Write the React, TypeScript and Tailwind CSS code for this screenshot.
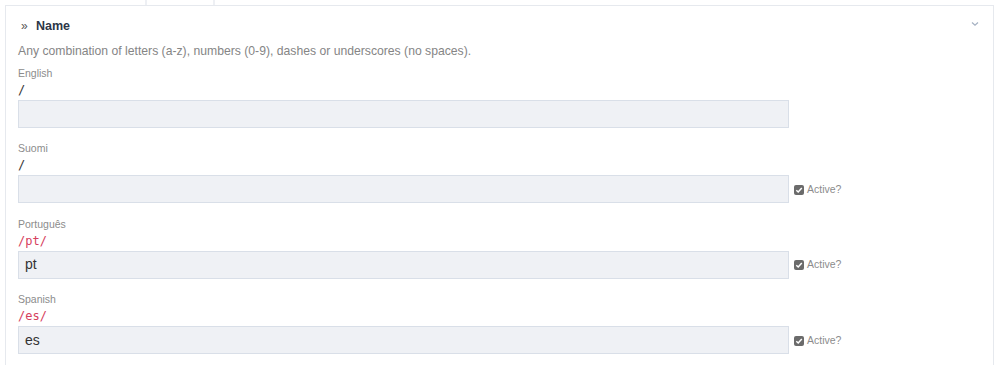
const rows = [
  { label: "English", slug: "/", value: "", active: false },
  { label: "Suomi", slug: "/", value: "", active: true },
  { label: "Português", slug: "/pt/", value: "pt", active: true },
  { label: "Spanish", slug: "/es/", value: "es", active: true },
];

function Check() {
  return (
    <span className="w-[10px] h-[10px] rounded-[2px] bg-[#6b6b6b] flex items-center justify-center">
      <svg width="8" height="8" viewBox="0 0 8 8">
        <path d="M1.3 4.2 L3.2 6 L6.8 1.9" fill="none" stroke="#fff" strokeWidth="1.5" />
      </svg>
    </span>
  );
}

export default function App() {
  return (
    <div className="w-[1000px] h-[365px] overflow-hidden bg-white font-['Liberation_Sans',Arial,sans-serif]">
      <div className="flex h-[5px]">
        <div className="w-[145px]" />
        <div className="w-[70px] border-x-2 border-[#eef0f4]" />
      </div>
      <div className="ml-[5px] w-[989px] border border-[#e6e9ee] bg-white pl-[12px] pr-[14px] pb-6">
        <div className="flex items-center h-[16px] mt-[12px]">
          <span className="text-[12px] text-[#555] leading-none ml-[3px] w-[15px]">»</span>
          <span className="text-[12.5px] font-bold text-[#2d3748]">Name</span>
          <svg className="ml-auto -mt-[4px]" width="8" height="6" viewBox="0 0 8 6">
            <path d="M1 1.5 L4 4.3 L7 1.5" fill="none" stroke="#a5b1c2" strokeWidth="1.2" />
          </svg>
        </div>
        <p className="text-[12.2px] leading-[18px] text-[#858585] mt-[8px]">
          Any combination of letters (a-z), numbers (0-9), dashes or underscores (no spaces).
        </p>
        <div className="mt-[6px] flex flex-col gap-[13.4px]">
          {rows.map((r) => (
            <div key={r.label}>
              <div className="text-[10.5px] leading-[14px] text-[#8c8c8c]">{r.label}</div>
              <div
                className={`font-['DejaVu_Sans_Mono',monospace] text-[12px] leading-[16px] mt-[2px] ${
                  r.slug === "/" ? "text-[#333]" : "text-[#d6405e]"
                }`}
              >
                {r.slug}
              </div>
              <div className="flex items-center mt-[2px]">
                <div className="w-[771px] h-[28px] bg-[#eff1f5] border border-[#d9dfe8] flex items-center px-[6px] text-[14px] text-[#333]">
                  {r.value}
                </div>
                {r.active && (
                  <label className="flex items-center gap-[3px] ml-[5px] mt-[1px] text-[10.5px] text-[#8c8c8c]">
                    <Check />
                    Active?
                  </label>
                )}
              </div>
            </div>
          ))}
        </div>
      </div>
    </div>
  );
}
